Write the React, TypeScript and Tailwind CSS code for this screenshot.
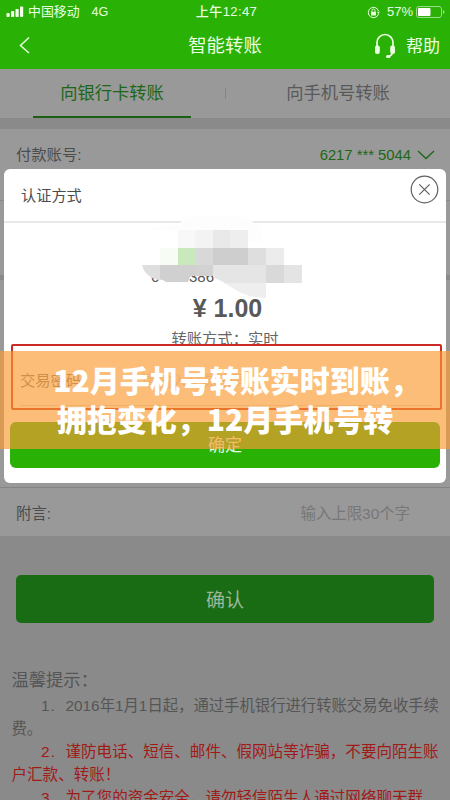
import React from 'react';

interface NoteLineProps {
  no?: string;
  warn?: boolean;
  children: React.ReactNode;
}

const NoteLine: React.FC<NoteLineProps> = ({ no, warn, children }) => (
  <div
    className={`flex h-[23.2px] items-center whitespace-nowrap leading-[23px] ${
      warn ? 'text-[15.55px] text-[#a11a18]' : 'text-[15.35px] text-[#555555]'
    }`}
  >
    {no && <span className="ml-[29.5px] w-[24.5px] shrink-0 tracking-[1px]">{no}.</span>}
    <span>{children}</span>
  </div>
);

const StatusBar: React.FC = () => (
  <div className="grid h-[24px] grid-cols-3 items-center text-[12px] text-[#e8ffe0]">
    <div className="flex items-center pl-[6px]">
      <svg width="18" height="12" viewBox="0 0 18 12" fill="#f0ffe9">
        <rect x="0.5" y="7" width="3.2" height="4" rx="0.8" />
        <rect x="5" y="5" width="3.2" height="6" rx="0.8" />
        <rect x="9.5" y="3" width="3.2" height="8" rx="0.8" />
        <rect x="14" y="0.5" width="3.2" height="10.5" rx="0.8" />
      </svg>
      <span className="ml-[4px] text-[12.9px]">中国移动</span>
      <span className="ml-[12px] pt-px text-[12.5px]">4G</span>
    </div>
    <div className="pl-[3px] text-center text-[13px] font-medium tracking-[0.4px]">上午12:47</div>
    <div className="flex items-center justify-end pr-[5px]">
      <svg width="13" height="13" viewBox="0 0 13 13" fill="none" stroke="#e8ffe0">
        <path d="M11.6 7.6A5.2 5.2 0 1 1 11.5 5" strokeWidth="1" />
        <path d="M10 5.8h2.8l-1.3 2z" fill="#e8ffe0" stroke="none" />
        <rect x="4" y="5.8" width="5" height="3.7" fill="#e8ffe0" stroke="none" />
        <path d="M5 6V4.5a1.5 1.5 0 0 1 3 0V6" strokeWidth="0.9" />
      </svg>
      <span className="ml-[7px] text-[13px]">57%</span>
      <svg className="ml-[3px]" width="29" height="12" viewBox="0 0 29 12">
        <rect x="0.5" y="0.5" width="25" height="11" rx="2.5" fill="none" stroke="#9ddb8c" />
        <rect x="2" y="2" width="12.5" height="8" rx="1" fill="#fff" />
        <path d="M27 4v4q1.5-.5 1.5-2T27 4z" fill="#9ddb8c" />
      </svg>
    </div>
  </div>
);

const NavBar: React.FC = () => (
  <div className="grid h-[44px] grid-cols-3 items-center text-[#eaffe2]">
    <svg className="-mt-[2px] ml-[18px]" width="13" height="20" viewBox="0 0 13 20" fill="none" stroke="#e2fbd9" strokeWidth="1.6">
      <path d="M11 2.5 2.5 10.5 11 18" />
    </svg>
    <div className="text-center text-[18.4px] leading-none">智能转账</div>
    <div className="flex items-center justify-end pr-[10px]">
      <svg width="22" height="28" viewBox="0 0 22 28" fill="none" stroke="#eaffe2">
        <path d="M3 16v-5.500a8 8 0 0 1 16 0V17c0 4.500-1 6.700-4.500 7.500" strokeWidth="1.7" />
        <rect x="1" y="13.500" width="4.800" height="8.500" rx="2" fill="#eaffe2" stroke="none" />
        <rect x="16.200" y="13.500" width="4.800" height="8.500" rx="2" fill="#eaffe2" stroke="none" />
        <rect x="12" y="23" width="4.500" height="3" rx="1.500" fill="#eaffe2" stroke="none" />
      </svg>
      <span className="ml-[10px] text-[17px] leading-none">帮助</span>
    </div>
  </div>
);

const Mosaic: React.FC = () => (
  <svg className="mx-auto block" width="170" height="82" viewBox="0 0 170 82">
    <path d="M8 12 38 7 48 0h57l16 10v15H38V15z" fill="#fdfdfd" />
    <rect x="38" y="13" width="17" height="18" fill="#f8f8f8" />
    <rect x="55" y="13" width="18" height="18" fill="#f3f3f3" />
    <rect x="73" y="13" width="35" height="18" fill="#e9e9e9" />
    <rect x="90" y="13" width="18" height="18" fill="#eeeeee" />
    <rect x="20" y="31" width="18" height="17" fill="#f7fcf5" />
    <rect x="38" y="31" width="18" height="17" fill="#c9e8bb" />
    <rect x="56" y="31" width="17" height="17" fill="#d8d8d8" />
    <rect x="73" y="31" width="35" height="17" fill="#cecece" />
    <rect x="108" y="31" width="18" height="17" fill="#dedede" />
    <rect x="126" y="31" width="18" height="17" fill="#ececec" />
    <text x="11" y="65" fontSize="15" fill="#555">6</text>
    <text x="49" y="65" fontSize="15" fill="#555">386</text>
    <path d="M2 48h38v15H18Q4 59 2 48z" fill="#dedede" />
    <path d="M20 48h35v10l-5 2-2 5H26l-6-4z" fill="#d0d0d0" />
    <rect x="55" y="48" width="18" height="11" fill="#d2d2d2" />
    <path d="M73 48h53v18H85l-12-6z" fill="#e5e5e5" />
    <path d="M84 66h42v15q-20-1-30-8z" fill="#eeeeee" />
    <rect x="126" y="48" width="18" height="18" fill="#d9d9d9" />
    <rect x="144" y="48" width="18" height="18" fill="#e4e4e4" />
  </svg>
);

const AuthModal: React.FC = () => (
  <div className="absolute left-[4px] top-[169px] flex h-[314px] w-[442px] flex-col rounded-[6px] bg-white">
    <div className="flex h-[54px] items-center justify-between border-b-2 border-[#e8e8e8] pl-[17px] pr-[7px]">
      <span className="pt-[2px] text-[15.2px] text-[#4b4b4b]">认证方式</span>
      <svg className="mb-[11px]" width="29" height="29" viewBox="0 0 29 29" fill="none" stroke="#5f5f5f">
        <circle cx="14.500" cy="14.500" r="13.300" strokeWidth="1.2" />
        <path d="M9.300 9.300 19.700 19.700M19.700 9.300 9.300 19.700" strokeWidth="1.200" />
      </svg>
    </div>
    <div className="-mt-[6px] h-[82px]">
      <Mosaic />
    </div>
    <div className="-mt-[5px] flex h-[28px] items-center justify-center gap-[7px] pl-[5px] text-[25px] font-bold leading-none text-[#595959]">
      <span>¥</span>
      <span>1.00</span>
    </div>
    <div className="mt-[5px] flex h-[17px] justify-center overflow-hidden whitespace-nowrap text-[15.300px] leading-[24px] text-[#666]">
      转账方式：实时
    </div>
    <div className="ml-[7px] mr-[4px] h-[66px] shrink-0 rounded-[2px] border-2 border-[#cc2b25] px-[7px]">
      <div className="flex h-[60px] items-center gap-[60px] border-b border-[#dddddd] pt-[11px] text-[15.300px] text-[#777]">
        <span>交易密码</span>
        <span className="text-[#d5d5d5]">请输入交易密码</span>
      </div>
    </div>
    <div className="mx-[6px] mt-[12px] flex h-[46px] shrink-0 items-center justify-center rounded-[6px] bg-[#2ab106] pt-[2px] text-[17px] text-[#e8f8e2]">
      确定
    </div>
  </div>
);

const App: React.FC = () => {
  return (
    <div className="relative h-[800px] w-[450px] overflow-hidden bg-[#8a8a8a] font-['Liberation_Sans','Noto_Sans_CJK_SC',sans-serif]">
      <div className="h-[69px] bg-[#2ab106]">
        <StatusBar />
        <NavBar />
      </div>

      {/* Tabs */}
      <div className="flex h-[49px] items-center justify-between bg-[#999999] px-[33px] text-[17.300px] leading-none">
        <div className="flex h-full w-[158px] items-center justify-center border-b-2 border-[#1b5f15] pt-[3px] text-[#1d6716]">
          向银行卡转账
        </div>
        <div className="h-[11px] w-px bg-[#858585]" />
        <div className="flex h-full w-[158px] items-center justify-center border-b-2 border-transparent pt-[3px] text-[#595959]">
          向手机号转账
        </div>
      </div>

      {/* Transfer form */}
      <div className="mt-[11px] flex h-[359px] flex-col bg-[#999999]">
        <div className="flex h-[72px] items-start justify-between border-b border-[#8a8a8a] pl-[16px] pr-[15px] pt-[13px] text-[15.300px] leading-[26px] text-[#4c4c4c]">
          <span>付款账号:</span>
          <span className="flex items-center text-[14.800px] text-[#1d6716]">
            6217 *** 5044
            <svg className="ml-[6px]" width="18" height="10" viewBox="0 0 18 10" fill="none" stroke="#1d6716" strokeWidth="1.300">
              <path d="m1 1 8 7.500L17 1" />
            </svg>
          </span>
        </div>
        <div className="h-[74px]" />
        <div className="h-[5px] bg-[#8a8a8a]" />
        <div className="flex-1 border-b border-[#858585]" />
      </div>
      <div className="flex h-[48px] items-center justify-between bg-[#999999] pl-[16px] pr-[40px] pt-[3px] text-[15.400px] text-[#4c4c4c]">
        <span>附言:</span>
        <span className="text-[#777777]">输入上限30个字</span>
      </div>

      <div className="mx-[16px] mt-[39px] flex h-[48px] items-center justify-center rounded-[5px] bg-[#1a6c14] pt-[4px] text-[19px] text-[#9cb79a]">
        确认
      </div>

      {/* Notes */}
      <div className="mt-[44.500px] pl-[11.5px]">
        <div className="flex h-[26px] items-center text-[17.300px] text-[#555555]">温馨提示：</div>
        <NoteLine no="1">2016年1月1日起，通过手机银行进行转账交易免收手续</NoteLine>
        <NoteLine>费。</NoteLine>
        <NoteLine no="2" warn>谨防电话、短信、邮件、假网站等诈骗，不要向陌生账</NoteLine>
        <NoteLine warn>户汇款、转账！</NoteLine>
        <NoteLine no="3" warn>为了您的资金安全，请勿轻信陌生人通过网络聊天群、</NoteLine>
      </div>

      <AuthModal />

      {/* Headline banner */}
      <div className="absolute left-0 top-[351px] flex h-[98px] w-full flex-col items-center whitespace-nowrap bg-[#fa9b32]/66 pt-[9px] font-['Noto_Sans_CJK_SC',sans-serif] text-[30px] font-black leading-[39px] text-white">
        <div className="-mr-[23px]">12月手机号转账实时到账，</div>
        <div>拥抱变化，12月手机号转</div>
      </div>
    </div>
  );
};

export default App;
